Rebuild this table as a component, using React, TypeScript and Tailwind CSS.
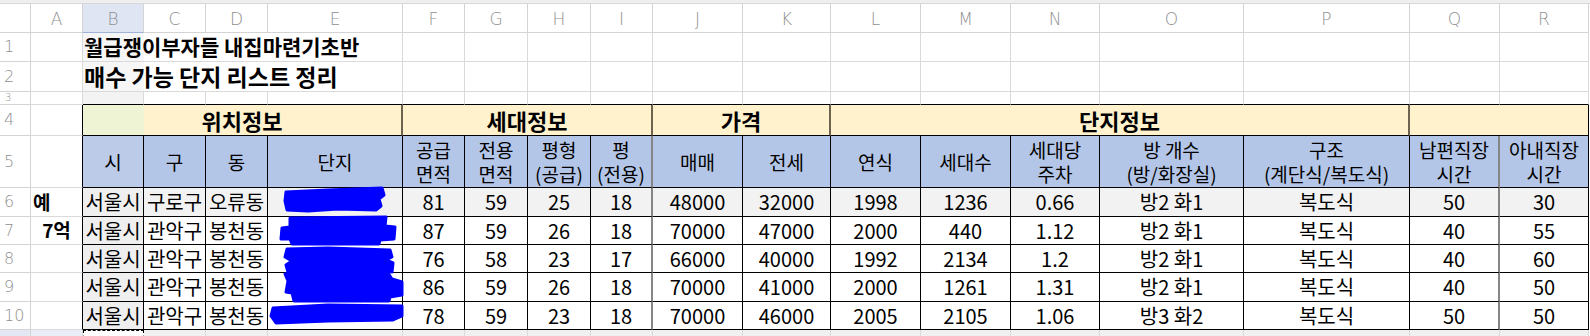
import React from "react";

// column widths (row header + A..R)
const LETTERS = ["A", "B", "C", "D", "E", "F", "G", "H", "I", "J", "K", "L", "M", "N", "O", "P", "Q", "R"];

const GRID = "border-r border-b border-[#dadada]";
const HDR = "border-r border-b border-[#d4d4d4] text-[#8f8f8f] font-['DejaVu_Sans',sans-serif] font-extralight";

const HEAD5: string[][] = [
  ["시"],
  ["구"],
  ["동"],
  ["단지"],
  ["공급", "면적"],
  ["전용", "면적"],
  ["평형", "(공급)"],
  ["평", "(전용)"],
  ["매매"],
  ["전세"],
  ["연식"],
  ["세대수"],
  ["세대당", "주차"],
  ["방 개수", "(방/화장실)"],
  ["구조", "(계단식/복도식)"],
  ["남편직장", "시간"],
  ["아내직장", "시간"],
];

interface DataRow {
  n: number;
  a?: string;
  aAlign?: string;
  cells: string[];
  scribble: string;
}

const ROWS: DataRow[] = [
  {
    n: 6,
    a: "예",
    aAlign: "justify-start pl-[2px] text-[19px]",
    cells: ["서울시", "구로구", "오류동", "", "81", "59", "25", "18", "48000", "32000", "1998", "1236", "0.66", "방2 화1", "복도식", "50", "30"],
    scribble: "18,4 60,2 114,0 116,7 111,11 113,18 108,22 70,21 40,23 19,22 17,13",
  },
  {
    n: 7,
    a: "7억",
    aAlign: "justify-center text-[19px]",
    cells: ["서울시", "관악구", "봉천동", "", "87", "59", "26", "18", "70000", "47000", "2000", "440", "1.12", "방2 화1", "복도식", "40", "55"],
    scribble: "22,1 118,0 117,9 127,10 126,22 112,23 111,27 24,27 22,22 13,22 14,11 22,10",
  },
  {
    n: 8,
    cells: ["서울시", "관악구", "봉천동", "", "76", "58", "23", "17", "66000", "40000", "1992", "2134", "1.2", "방2 화1", "복도식", "40", "60"],
    scribble: "19,4 60,3 122,5 124,12 118,15 125,18 124,27 20,27 18,20 24,16 17,12",
  },
  {
    n: 9,
    cells: ["서울시", "관악구", "봉천동", "", "86", "59", "26", "18", "70000", "41000", "2000", "1261", "1.31", "방2 화1", "복도식", "40", "50"],
    scribble: "17,1 120,0 124,6 134,9 134,22 122,24 121,28 26,28 24,20 18,19 20,8",
  },
  {
    n: 10,
    cells: ["서울시", "관악구", "봉천동", "", "78", "59", "23", "18", "70000", "46000", "2005", "2105", "1.06", "방3 화2", "복도식", "50", "50"],
    scribble: "5,6 60,3 134,4 134,14 125,18 60,19 8,21 3,14",
  },
];

const RowHead = ({ n, cls = "" }: { n?: number | string; cls?: string }) => (
  <div className={`${HDR} flex items-center pl-[4px] text-[16px] overflow-hidden ${cls}`}>{n}</div>
);

const sep = (i: number) =>
  i === 7 || i === 15 ? "border-r-2 border-r-[#858585]" : "";

const App = () => {
  return (
    <div className="w-[1590px] h-[336px] overflow-hidden bg-white font-['Noto_Sans_CJK_KR',sans-serif] text-black">
      <div className="h-[4px] bg-[#efefef] border-b border-[#d8d8d8]" />
      <div className="grid grid-cols-[31px_52px_61px_62px_62px_135px_62px_63px_63px_62px_90px_88px_90px_90px_89px_144px_166px_90px_89px] grid-rows-[29px_29px_30px_13px_31px_52px_29px_28px_28px_29px_28px_20px]">
        {/* column letters */}
        <div className={HDR} />
        {LETTERS.map((l) => (
          <div
            key={l}
            className={`${HDR} flex items-center justify-center pt-[3px] text-[17px] ${
              l === "B" ? "bg-[#dfe5f3] text-[#3f69b5] border-b-[#9fb3da]" : ""
            }`}
          >
            {l}
          </div>
        ))}

        {/* row 1 */}
        <RowHead n={1} />
        <div className={GRID} />
        <div className={`col-span-4 ${GRID} flex items-center pl-[1px] text-[21px] font-bold whitespace-nowrap bg-[linear-gradient(to_right,#f6f6f6_61px,#ffffff_61px)]`}>
          월급쟁이부자들 내집마련기초반
        </div>
        {LETTERS.slice(5).map((l) => (
          <div key={"r1" + l} className={GRID} />
        ))}

        {/* row 2 */}
        <RowHead n={2} />
        <div className={GRID} />
        <div className={`col-span-4 ${GRID} flex items-center pl-[1px] text-[23px] font-bold whitespace-nowrap bg-[linear-gradient(to_right,#f6f6f6_61px,#ffffff_61px)]`}>
          매수 가능 단지 리스트 정리
        </div>
        {LETTERS.slice(5).map((l) => (
          <div key={"r2" + l} className={GRID} />
        ))}

        {/* row 3 */}
        <div className={`${HDR} flex items-center pl-[5px] text-[10px] leading-[10px] overflow-hidden`}>3</div>
        <div className={GRID} />
        {LETTERS.slice(1).map((l) => (
          <div key={"r3" + l} className={`${GRID} border-b-black ${l === "B" ? "bg-[#f3f3f3]" : ""}`} />
        ))}

        {/* row 4 */}
        <RowHead n={4} />
        <div className={`${GRID} border-r-black`} />
        <div className="col-span-4 border-b border-black border-r-2 border-r-[#6d6350] flex items-center justify-center text-[22px] font-bold bg-[linear-gradient(to_right,#eef4d4_61px,#fff2cc_61px)]">
          위치정보
        </div>
        <div className="col-span-4 border-b border-black border-r-2 border-r-[#6d6350] bg-[#fff2cc] flex items-center justify-center text-[22px] font-bold">
          세대정보
        </div>
        <div className="col-span-2 border-b border-black border-r-2 border-r-[#6d6350] bg-[#fff2cc] flex items-center justify-center text-[22px] font-bold">
          가격
        </div>
        <div className="col-span-5 border-b border-black border-r-2 border-r-[#6d6350] bg-[#fff2cc] flex items-center justify-center text-[22px] font-bold">
          단지정보
        </div>
        <div className="col-span-2 border-b border-r border-black bg-[#fff2cc]" />

        {/* row 5 */}
        <RowHead n={5} />
        <div className={`${GRID} border-r-black`} />
        {HEAD5.map((lines, i) => (
          <div
            key={"h5" + i}
            className={`border-r border-b border-black ${sep(i)} ${
              i === 0 ? "bg-[#bccbe8]" : "bg-[#b4c6e7]"
            } flex flex-col items-center justify-center text-[19px] leading-[24px] whitespace-nowrap`}
          >
            {lines.map((t) => (
              <span key={t}>{t}</span>
            ))}
          </div>
        ))}

        {/* data rows */}
        {ROWS.map((r) => (
          <React.Fragment key={r.n}>
            <RowHead n={r.n} />
            <div
              className={`${GRID} border-r-black flex items-center font-bold whitespace-nowrap ${r.aAlign ?? ""}`}
            >
              {r.a}
            </div>
            {r.cells.map((c, i) => (
              <div
                key={r.n + "-" + i}
                className={`relative border-r border-b border-black ${sep(i)} ${
                  i === 0 ? "bg-[#efefef]" : r.n === 6 ? "bg-[#f2f2f2]" : ""
                } flex items-center justify-center text-[20px] whitespace-nowrap`}
              >
                {i === 3 ? (
                  <svg
                    className="absolute left-0 top-0 overflow-visible"
                    width="135"
                    height="28"
                    viewBox="0 0 135 28"
                  >
                    <polygon
                      points={r.scribble}
                      fill="#0000ff"
                      stroke="#0000ff"
                      strokeWidth="3"
                      strokeLinejoin="round"
                    />
                  </svg>
                ) : (
                  c
                )}
              </div>
            ))}
          </React.Fragment>
        ))}

        {/* row 11 (partly visible) */}
        <RowHead cls="bg-[#e2e7f2]" />
        <div className="border-r border-[#dadada] bg-[#e9edf5]" />
        <div className="border border-dashed border-black bg-white" />
        {LETTERS.slice(2).map((l) => (
          <div key={"r11" + l} className={`border-r border-[#dadada] bg-[#f0f0f0]`} />
        ))}
      </div>
    </div>
  );
};

export default App;
